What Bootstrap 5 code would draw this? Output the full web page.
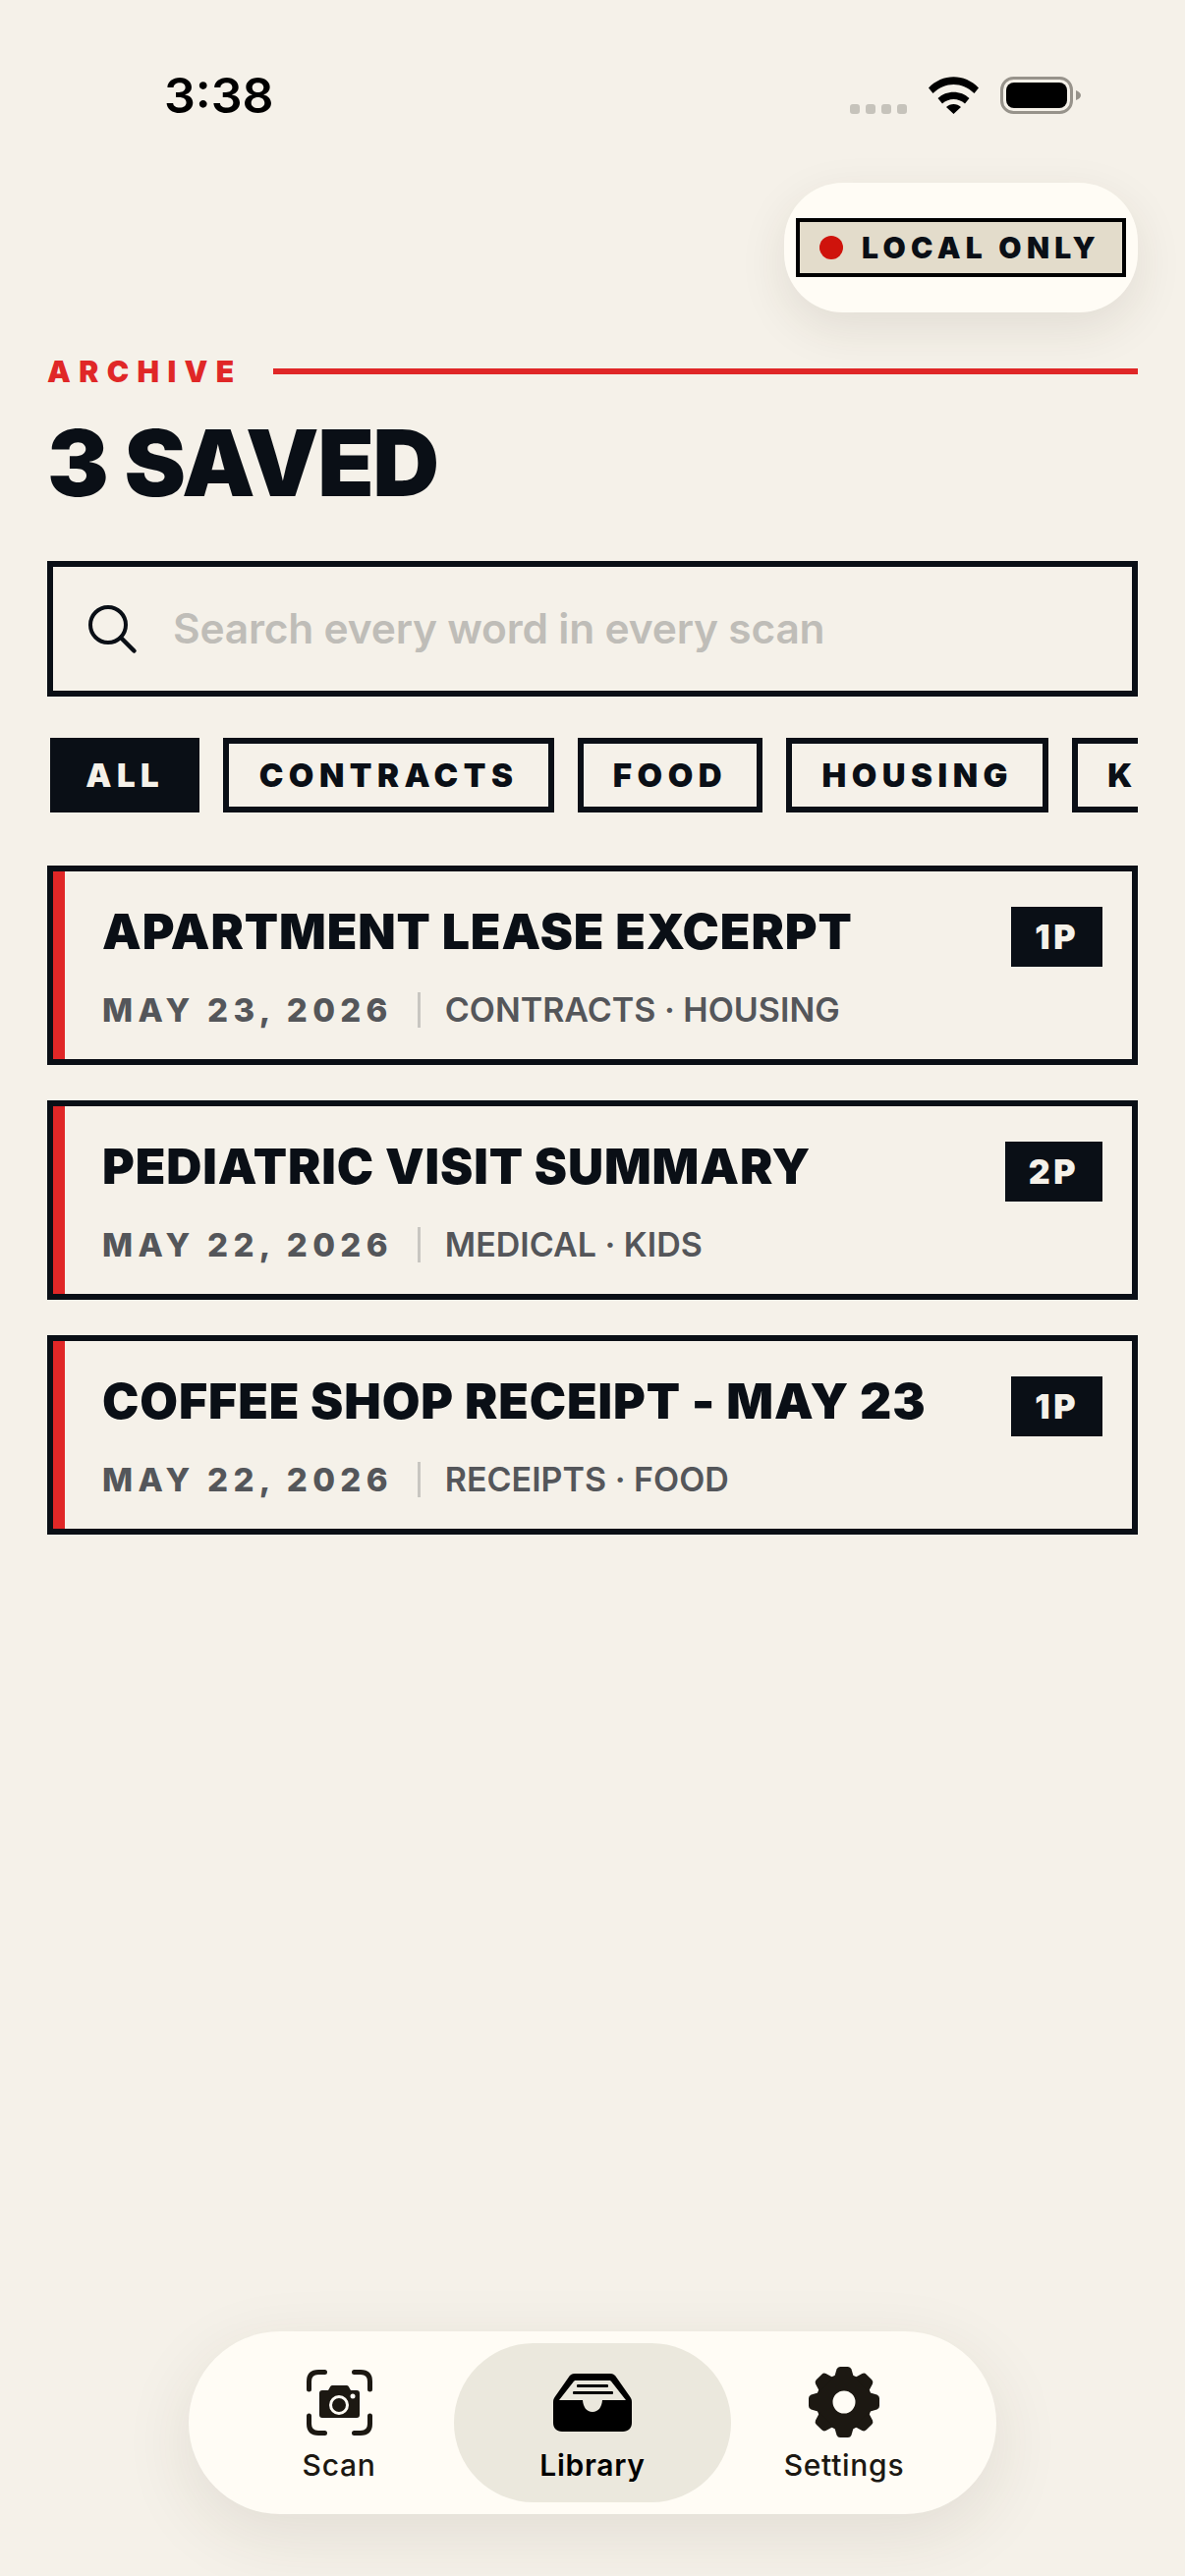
<!DOCTYPE html>
<html lang="en">
<head>
    <meta charset="UTF-8">
    <meta name="viewport" content="width=device-width, initial-scale=1.0">
    <title>Library</title>
    <link href="https://cdn.jsdelivr.net/npm/bootstrap@5.3.0/dist/css/bootstrap.min.css" rel="stylesheet">
    <style>
        html, body { height: 100%; }
        body {
            width: 1206px;
            height: 2622px;
            overflow: hidden;
            background: #f5f1e9;
            color: #0a0f16;
            font-family: Inter, "Liberation Sans", sans-serif;
            position: relative;
        }

        /* status bar */
        .status-row { height: 186px; padding: 0 106px 0 167px; }
        .clock { font-size: 50px; font-weight: 600; line-height: 1; color: #000; padding-top: 72px; }
        .status-icons { padding-top: 78px; }
        .sig-dot { width: 10px; height: 10px; border-radius: 3px; background: #c6c3bb; }
        .sig-dots { gap: 6px; margin-top: 28px; margin-right: 22px; }
        .wifi-ico { margin-right: 22px; }

        /* local only */
        .local-wrap { padding-right: 48px; }
        .local-pill {
            width: 360px; height: 132px; border-radius: 60px;
            background: #fffcf5;
            box-shadow: 0 16px 48px rgba(60, 50, 30, .10);
            padding-left: 12px;
        }
        .local-tag {
            width: 336px; height: 60px;
            background: #e3dccb;
            border: 4px solid #000;
            gap: 19px;
            padding-left: 20px;
        }
        .local-dot { width: 24px; height: 24px; border-radius: 50%; background: #cf130c; }
        .local-text { font-size: 30px; font-weight: 900; letter-spacing: 5.3px; line-height: 1; }

        /* heading */
        .main-pad { padding: 0 48px; }
        .archive-row { margin-top: 44px; gap: 31px; height: 32px; }
        .archive-label { font-size: 30px; font-weight: 900; letter-spacing: 8.400px; color: #e02727; line-height: 1; }
        .archive-line { height: 6px; background: #e02727; }
        .page-title { font-size: 94px; font-weight: 900; letter-spacing: -1.5px; line-height: 1; margin: 30px 0 0 0; }

        /* search */
        .search-box {
            height: 138px; margin-top: 53px;
            border: 6px solid #0a0f16;
            padding-left: 36px; gap: 34px;
        }
        .search-hint { font-size: 42.500px; font-weight: 600; letter-spacing: -.2px; color: #bfbdb8; line-height: 1; }

        /* chips */
        .chip-row { margin-top: 42px; gap: 24px; overflow: hidden; padding-left: 3px; }
        .chip-item {
            height: 76px; flex: none;
            border: 6px solid #0a0f16;
            padding: 0 30.200px;
            font-size: 33px; font-weight: 900; letter-spacing: 5.500px; line-height: 1;
        }
        .chip-item.on { background: #0a0f16; color: #f5f1e9; }

        /* scan cards */
        .scan-list { margin-top: 54px; gap: 36px; }
        .scan-card {
            height: 203px;
            border: 6px solid #0a0f16;
            position: relative;
            padding: 34px 30px 0 50px;
        }
        .scan-bar { position: absolute; left: 0; top: 0; bottom: 0; width: 12px; background: #e02727; }
        .scan-title { font-size: 50px; font-weight: 900; letter-spacing: .9px; line-height: 1; margin: 0; padding-top: 2px; }
        .page-tag {
            height: 61px; padding: 0 24px;
            background: #0a0f16; color: #f5f1e9;
            font-size: 34px; font-weight: 900; letter-spacing: 3.500px; line-height: 1;
            margin-top: 2px;
        }
        .scan-meta { margin-top: 26px; height: 36px; color: #54565a; }
        .scan-date { font-size: 33px; font-weight: 800; letter-spacing: 5.300px; line-height: 1; }
        .meta-sep { width: 3px; height: 36px; background: #c8c6c1; margin: 0 25px 0 25px; }
        .scan-tags { font-size: 34px; font-weight: 600; line-height: 1; }

        /* tab bar */
        .tab-pill {
            position: absolute; left: 192px; top: 2373px;
            width: 822px; height: 186px; border-radius: 93px;
            background: #fffcf5;
            box-shadow: 0 20px 70px rgba(60, 50, 30, .10);
            padding: 12px 0 12px 36px;
        }
        .tab-item { width: 234px; height: 162px; flex: none; border-radius: 81px; color: #1c1812; font-size: 30px; font-weight: 500; letter-spacing: .7px; line-height: 1; }
        .tab-item.on { width: 282px; background: #ebe8dd; color: #000; font-weight: 600; }
        .tab-item.last { width: 230px; }
        .tab-ico { height: 74px; margin-bottom: 12px; }
    </style>
</head>
<body>
    <div class="status-row d-flex justify-content-between">
        <div class="clock">3:38</div>
        <div class="status-icons d-flex align-items-start">
            <div class="sig-dots d-flex">
                <span class="sig-dot"></span><span class="sig-dot"></span><span class="sig-dot"></span><span class="sig-dot"></span>
            </div>
            <svg class="wifi-ico" width="51" height="38" viewBox="0 0 51 38">
                <path d="M0 11.500C14-3.500 37-3.500 51 11.500L46.500 17C34 5 17 5 4.500 17Z M9.500 22C18 13.500 33 13.500 41.500 22L37 27.500C30.500 21.500 20.500 21.500 14 27.500Z M18 31C22 27 29 27 33 31L25.500 38Z" fill="#000"/>
            </svg>
            <svg width="82" height="38" viewBox="0 0 82 38">
                <rect x="1.500" y="1.500" width="71" height="35" rx="12" fill="none" stroke="#97938b" stroke-width="3"/>
                <rect x="6" y="6" width="62" height="26" rx="8" fill="#000"/>
                <path d="M77 14C80 15 82 17 82 19C82 21 80 23 77 24Z" fill="#97938b"/>
            </svg>
        </div>
    </div>

    <div class="local-wrap d-flex justify-content-end">
        <div class="local-pill d-flex align-items-center">
            <div class="local-tag d-flex align-items-center">
                <span class="local-dot"></span>
                <span class="local-text">LOCAL ONLY</span>
            </div>
        </div>
    </div>

    <div class="main-pad">
        <div class="archive-row d-flex align-items-center">
            <span class="archive-label">ARCHIVE</span>
            <div class="archive-line flex-grow-1"></div>
        </div>
        <h1 class="page-title">3 SAVED</h1>

        <div class="search-box d-flex align-items-center">
            <svg width="52" height="52" viewBox="0 0 52 52">
                <circle cx="20" cy="22" r="18" fill="none" stroke="#0a0f16" stroke-width="4"/>
                <path d="M33 35L46.500 48.500" stroke="#0a0f16" stroke-width="4.500" stroke-linecap="round"/>
            </svg>
            <span class="search-hint">Search every word in every scan</span>
        </div>

        <div class="chip-row d-flex">
            <div class="chip-item on d-flex align-items-center">ALL</div>
            <div class="chip-item d-flex align-items-center">CONTRACTS</div>
            <div class="chip-item d-flex align-items-center">FOOD</div>
            <div class="chip-item d-flex align-items-center">HOUSING</div>
            <div class="chip-item d-flex align-items-center">KIDS</div>
        </div>

        <div class="scan-list d-flex flex-column">
            <div class="scan-card">
                <div class="scan-bar"></div>
                <div class="d-flex justify-content-between align-items-start">
                    <h2 class="scan-title">APARTMENT LEASE EXCERPT</h2>
                    <span class="page-tag d-flex align-items-center">1P</span>
                </div>
                <div class="scan-meta d-flex align-items-center">
                    <span class="scan-date">MAY 23, 2026</span>
                    <span class="meta-sep"></span>
                    <span class="scan-tags">CONTRACTS · HOUSING</span>
                </div>
            </div>
            <div class="scan-card">
                <div class="scan-bar"></div>
                <div class="d-flex justify-content-between align-items-start">
                    <h2 class="scan-title">PEDIATRIC VISIT SUMMARY</h2>
                    <span class="page-tag d-flex align-items-center">2P</span>
                </div>
                <div class="scan-meta d-flex align-items-center">
                    <span class="scan-date">MAY 22, 2026</span>
                    <span class="meta-sep"></span>
                    <span class="scan-tags">MEDICAL · KIDS</span>
                </div>
            </div>
            <div class="scan-card">
                <div class="scan-bar"></div>
                <div class="d-flex justify-content-between align-items-start">
                    <h2 class="scan-title">COFFEE SHOP RECEIPT - MAY 23</h2>
                    <span class="page-tag d-flex align-items-center">1P</span>
                </div>
                <div class="scan-meta d-flex align-items-center">
                    <span class="scan-date">MAY 22, 2026</span>
                    <span class="meta-sep"></span>
                    <span class="scan-tags">RECEIPTS · FOOD</span>
                </div>
            </div>
        </div>
    </div>

    <div class="tab-pill d-flex">
        <div class="tab-item d-flex flex-column align-items-center justify-content-center">
            <div class="tab-ico d-flex align-items-center">
                <svg width="67" height="67" viewBox="0 0 67 67">
                    <path d="M2.500 20V12Q2.500 2.500 12 2.500H18.500M48.500 2.500H55Q64.500 2.500 64.500 12V20M64.500 47V55Q64.500 64.500 55 64.500H48.500M18.500 64.500H12Q2.500 64.500 2.500 55V47" fill="none" stroke="#1c1812" stroke-width="5" stroke-linecap="round"/>
                    <path d="M16 21H22L24 17.500Q24.500 16 26 16H41Q42.500 16 43 17.500L45 21H51Q54 21 54 24V46Q54 49 51 49H16Q13 49 13 46V24Q13 21 16 21Z" fill="#1c1812"/>
                    <circle cx="33" cy="36" r="8.500" fill="none" stroke="#fffcf5" stroke-width="3"/>
                    <circle cx="47" cy="27" r="2.500" fill="#fffcf5"/>
                </svg>
            </div>
            <span>Scan</span>
        </div>
        <div class="tab-item on d-flex flex-column align-items-center justify-content-center">
            <div class="tab-ico d-flex align-items-center">
                <svg width="80" height="59" viewBox="0 0 80 59">
                    <path d="M22 0H58C61 0 63 1.500 64.500 4L78.500 24C79.500 25.500 80 27 80 29V50C80 55.500 76.500 59 71 59H9C3.500 59 0 55.500 0 50V29C0 27 .5 25.500 1.500 24L15.500 4C17 1.500 19 0 22 0Z" fill="#000"/>
                    <path d="M23 7H57C58 7 59 7.500 59.500 8.500L74 27H50C49.500 34 46 39 40 39C34 39 30.500 34 30 27H6L20.500 8.500C21 7.500 22 7 23 7Z" fill="#ebe8dd"/>
                    <rect x="24" y="11" width="32" height="3" rx="1" fill="#000"/>
                    <rect x="20" y="18" width="41" height="3" rx="1" fill="#000"/>
                </svg>
            </div>
            <span>Library</span>
        </div>
        <div class="tab-item last d-flex flex-column align-items-center justify-content-center">
            <div class="tab-ico d-flex align-items-center">
                <svg width="72" height="72" viewBox="-36 -36 72 72">
                    <circle r="20" fill="none" stroke="#1c1812" stroke-width="17"/>
                    <g fill="#1c1812">
                        <path id="gear-tooth" d="M-10-25L-7.500-33.500Q-6.500-36-4-36H4Q6.500-36 7.500-33.500L10-25Z"/>
                        <use href="#gear-tooth" transform="rotate(45)"/>
                        <use href="#gear-tooth" transform="rotate(90)"/>
                        <use href="#gear-tooth" transform="rotate(135)"/>
                        <use href="#gear-tooth" transform="rotate(180)"/>
                        <use href="#gear-tooth" transform="rotate(225)"/>
                        <use href="#gear-tooth" transform="rotate(270)"/>
                        <use href="#gear-tooth" transform="rotate(315)"/>
                    </g>
                </svg>
            </div>
            <span>Settings</span>
        </div>
    </div>

    <script src="https://cdn.jsdelivr.net/npm/bootstrap@5.3.0/dist/js/bootstrap.bundle.min.js"></script>
</body>
</html>
